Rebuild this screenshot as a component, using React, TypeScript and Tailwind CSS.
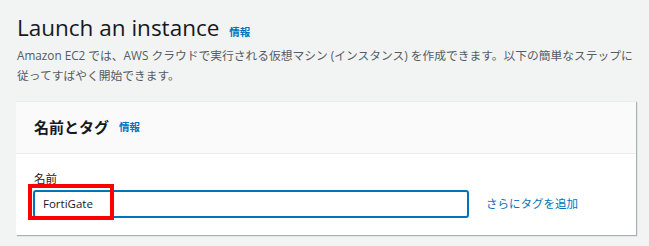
import React from "react";

export default function App() {
  const font = { fontFamily: '"Open Sans", "Noto Sans CJK JP", sans-serif' };
  return (
    <div
      className="w-[649px] h-[246px] bg-[#f2f3f3] overflow-hidden pl-[16px] pr-[13px] pt-[12px]"
      style={font}
    >
      <div className="flex items-baseline gap-[10px] pl-[1px]">
        <h1 className="text-[22.5px] leading-[32px] text-[#16191f] font-normal">
          Launch an instance
        </h1>
        <span className="text-[10.5px] font-bold text-[#0073bb]">情報</span>
      </div>
      <p className="pl-[1px] mt-[1px] text-[11.75px] leading-[20px] text-[#545b64]">
        Amazon EC2 では、AWS クラウドで実行される仮想マシン (インスタンス) を作成できます。以下の簡単なステップに従ってすばやく開始できます。
      </p>
      <div className="mt-[16px] w-[620px] bg-white shadow-[1px_1px_1px_0_rgba(0,28,36,0.3)] border-t border-[#eaeded]">
        <div className="h-[52px] bg-[#fafafa] border-b border-[#eaeded] flex items-center gap-[10px] pl-[18px]">
          <span className="text-[15px] font-bold text-[#16191f]">名前とタグ</span>
          <span className="text-[10.5px] font-bold text-[#0073bb]">情報</span>
        </div>
        <div className="relative pl-[17px] pt-[15px] pb-[17px]">
          <div className="text-[11.5px] leading-[20px] text-[#16191f] pl-[1px]">名前</div>
          <div className="flex items-center mt-[1px]">
            <div className="w-[436px] h-[28px] border-2 border-[#0073bb] rounded-[3px] flex items-center pl-[8px] text-[11.5px] text-[#16191f]">
              FortiGate
            </div>
            <span className="ml-[17px] text-[11.5px] text-[#0073bb]">さらにタグを追加</span>
          </div>
          <div className="absolute left-[12px] top-[30px] w-[86px] h-[36px] border-[4px] border-[#ff0000]" />
        </div>
      </div>
    </div>
  );
}
